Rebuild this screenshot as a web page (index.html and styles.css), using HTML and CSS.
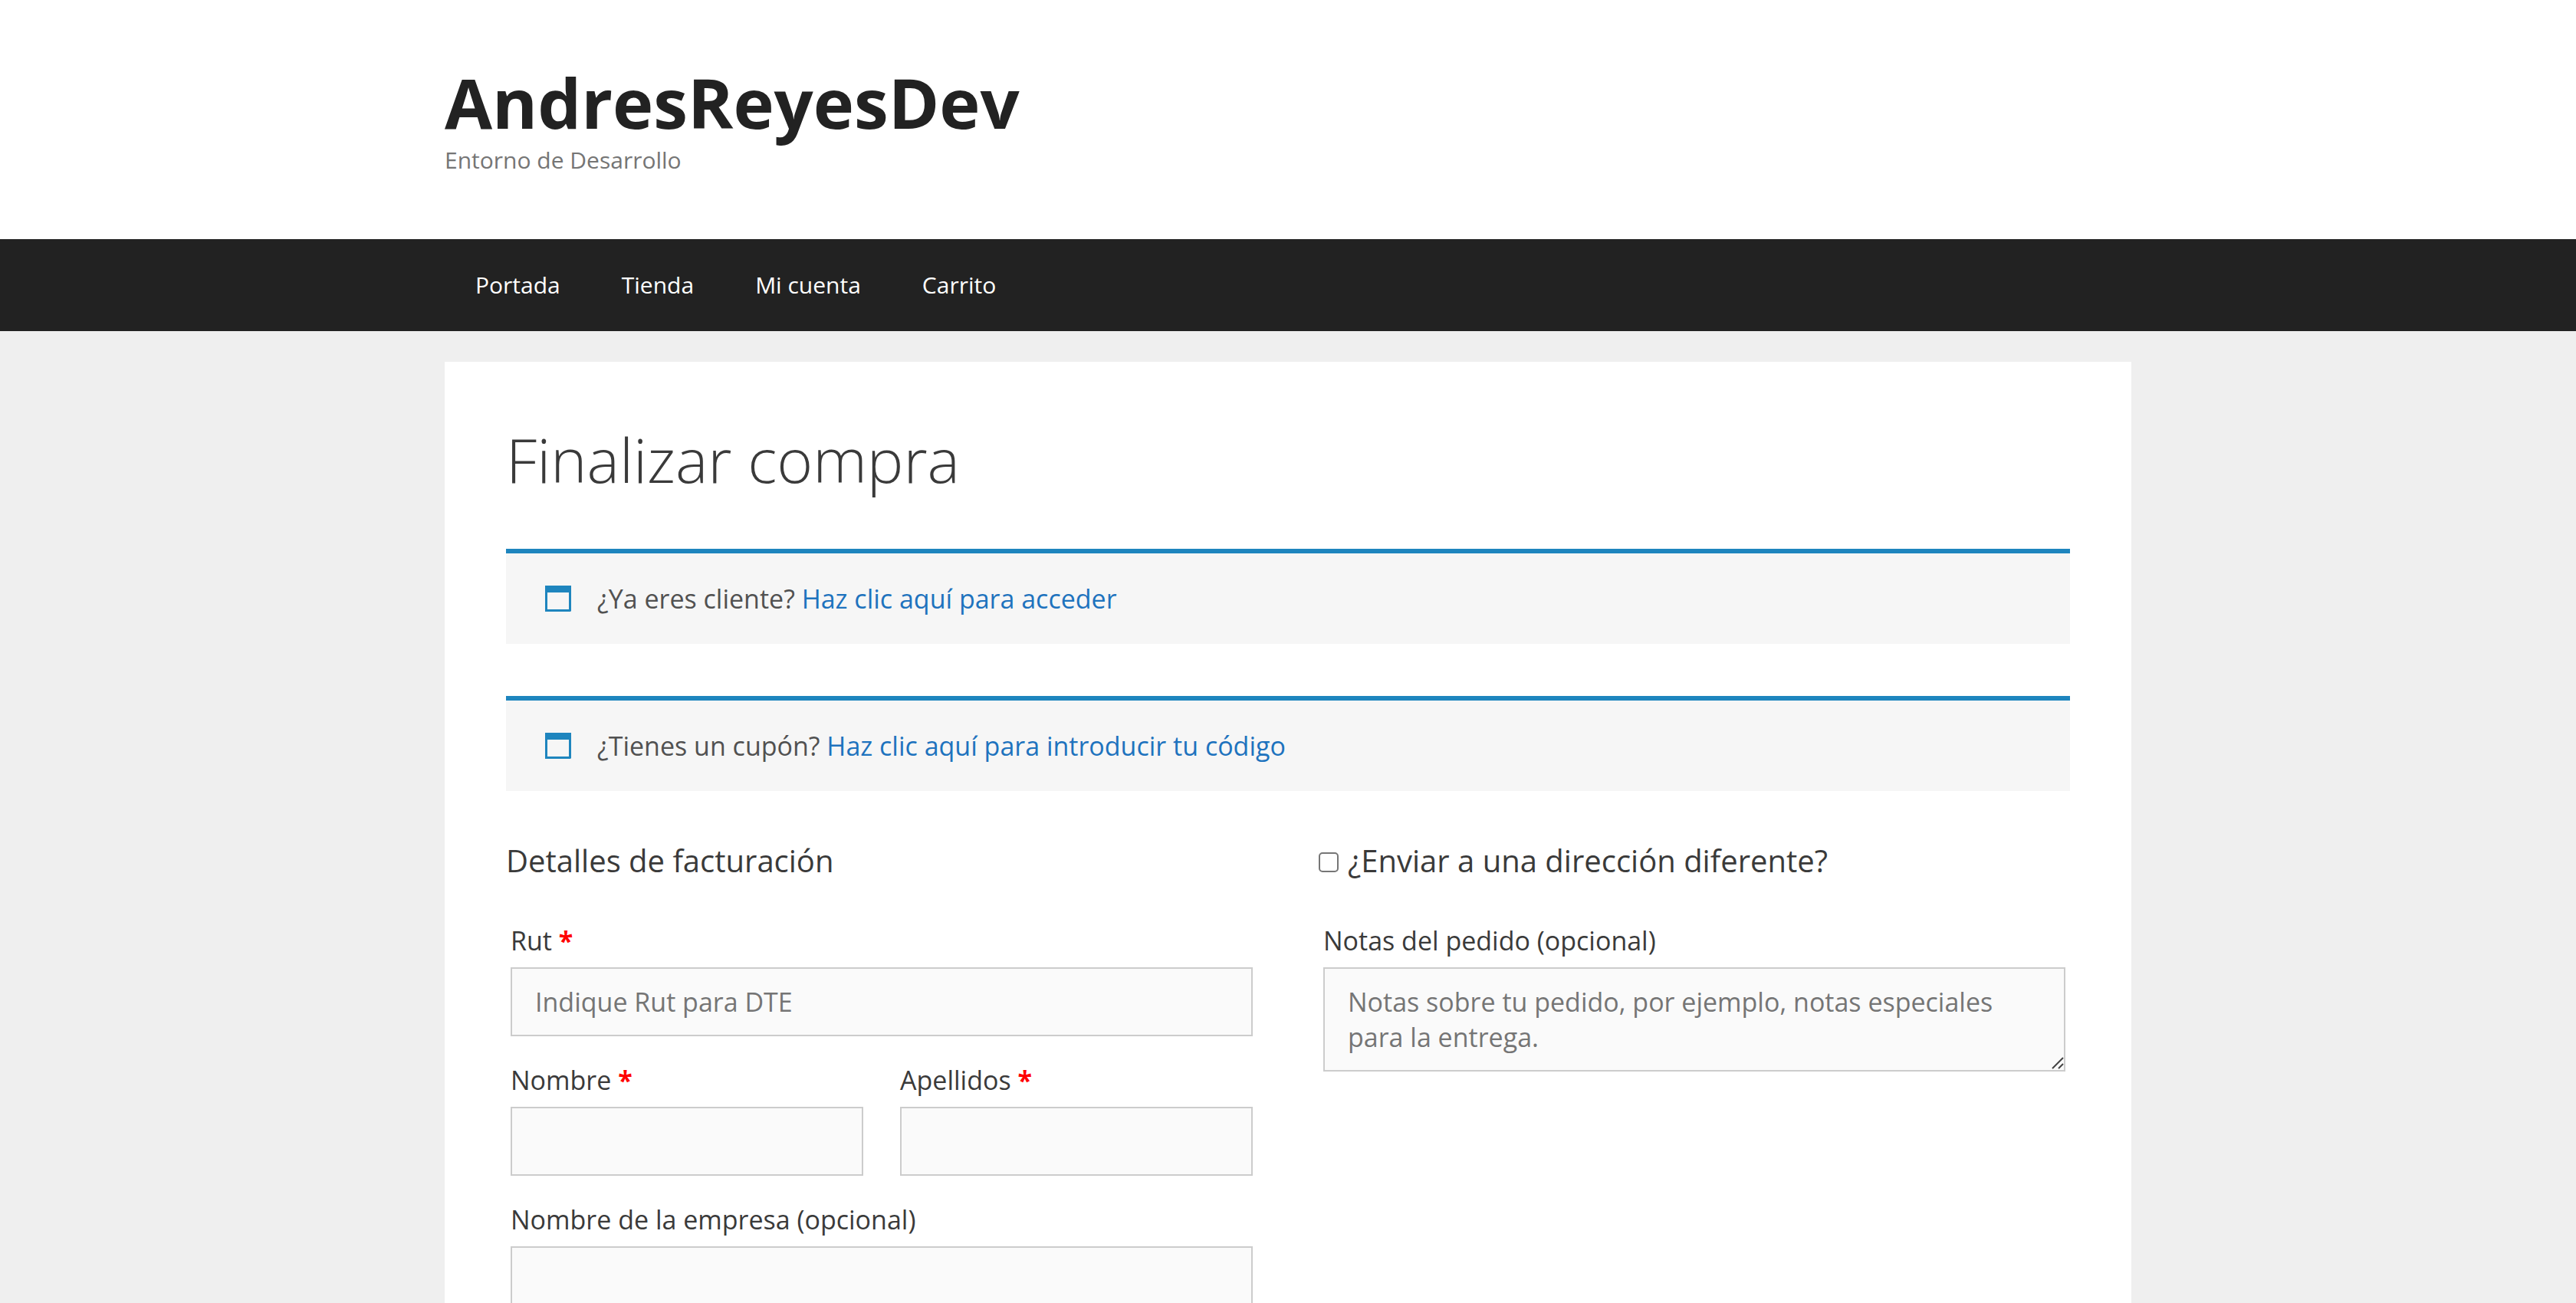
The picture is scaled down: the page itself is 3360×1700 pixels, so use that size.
FILE: index.html
```html
<!DOCTYPE html>
<html lang="es">
<head>
  <meta charset="utf-8">
  <meta name="viewport" content="width=device-width, initial-scale=1">
  <title>Finalizar compra – AndresReyesDev</title>
  <link rel="stylesheet" href="styles.css">
</head>
<body>
  <header class="site-header">
    <div class="container">
      <p class="site-title"><a href="#">AndresReyesDev</a></p>
      <p class="site-description">Entorno de Desarrollo</p>
    </div>
  </header>

  <nav class="main-nav">
    <ul class="container menu">
      <li><a href="#">Portada</a></li>
      <li><a href="#">Tienda</a></li>
      <li><a href="#">Mi cuenta</a></li>
      <li><a href="#">Carrito</a></li>
    </ul>
  </nav>

  <main class="container content">
    <h1 class="entry-title">Finalizar compra</h1>

    <div class="notice">
      <svg class="notice-icon" viewBox="0 0 34 34" aria-hidden="true"><path fill-rule="evenodd" d="M0 0H34V33L33 34H0ZM3 9V31H31V9Z"/></svg>
      <p>¿Ya eres cliente? <a href="#">Haz clic aquí para acceder</a></p>
    </div>

    <div class="notice">
      <svg class="notice-icon" viewBox="0 0 34 34" aria-hidden="true"><path fill-rule="evenodd" d="M0 0H34V33L33 34H0ZM3 9V31H31V9Z"/></svg>
      <p>¿Tienes un cupón? <a href="#">Haz clic aquí para introducir tu código</a></p>
    </div>

    <form class="checkout">
      <section>
        <h3 class="section-title">Detalles de facturación</h3>
        <div class="fields">
          <div class="field wide">
            <label for="rut">Rut <abbr class="required" title="obligatorio">*</abbr></label>
            <input class="control" type="text" id="rut" placeholder="Indique Rut para DTE">
          </div>
          <div class="field">
            <label for="nombre">Nombre <abbr class="required" title="obligatorio">*</abbr></label>
            <input class="control" type="text" id="nombre">
          </div>
          <div class="field">
            <label for="apellidos">Apellidos <abbr class="required" title="obligatorio">*</abbr></label>
            <input class="control" type="text" id="apellidos">
          </div>
          <div class="field wide">
            <label for="empresa">Nombre de la empresa (opcional)</label>
            <input class="control" type="text" id="empresa">
          </div>
        </div>
      </section>

      <section>
        <h3 class="section-title">
          <label class="toggle" for="enviar"><input class="checkbox" type="checkbox" id="enviar"><span>¿Enviar a una dirección diferente?</span></label>
        </h3>
        <div class="fields">
          <div class="field wide">
            <label for="notas">Notas del pedido (opcional)</label>
            <div class="textarea-wrap">
              <textarea class="control" id="notas" rows="2" placeholder="Notas sobre tu pedido, por ejemplo, notas especiales para la entrega."></textarea>
              <svg class="grip" viewBox="0 0 16 16" aria-hidden="true"><path d="M1 15L15 1M9 15L15 9"/></svg>
            </div>
          </div>
        </div>
      </section>
    </form>
  </main>
</body>
</html>
```

FILE: styles.css
```css
* {
  box-sizing: border-box;
}

body {
  margin: 0;
  background: #efefef;
  color: #3a3a3a;
  font-family: "Open Sans", sans-serif;
  font-size: 34px;
  line-height: 50px;
}

h1, h3, p, ul {
  margin: 0;
  padding: 0;
}

a {
  color: #1e73be;
  text-decoration: none;
}

.container {
  max-width: 2200px;
  margin: 0 auto;
}

.site-header {
  padding: 80px 0;
  background: #fff;
}

.site-title {
  font-size: 90px;
  font-weight: 700;
  line-height: 106px;
}

.site-title a {
  color: #222;
}

.site-description {
  color: #757575;
  font-size: 30px;
  line-height: 46px;
}

.main-nav {
  background: #222;
}

.menu {
  display: flex;
  list-style: none;
}

.menu a {
  display: block;
  padding: 0 40px;
  color: #fff;
  font-size: 30px;
  line-height: 120px;
}

.content {
  margin-top: 40px;
  padding: 80px;
  background: #fff;
}

.entry-title {
  margin-bottom: 70px;
  font-size: 80px;
  font-weight: 300;
  line-height: 94px;
}

.notice {
  display: flex;
  align-items: center;
  gap: 34px;
  margin-bottom: 68px;
  padding: 34px 68px 34px 51px;
  border-top: 6px solid #1e85be;
  background: #f6f6f6;
  color: #515151;
}

.notice-icon {
  width: 34px;
  height: 34px;
  fill: #1e85be;
}

.checkout {
  display: grid;
  grid-template-columns: 1fr 1fr;
  gap: 80px;
}

.section-title {
  margin-bottom: 42px;
  font-size: 40px;
  font-weight: 400;
  line-height: 46px;
}

.toggle {
  display: flex;
  align-items: center;
  gap: 12px;
}

.checkbox {
  width: 26px;
  height: 26px;
  margin: 4px 0 0;
  border: 2px solid #767676;
  border-radius: 5px;
  background: #fff;
  appearance: none;
}

.checkbox:checked {
  background: #1e73be;
}

.fields {
  display: grid;
  grid-template-columns: 1fr 1fr;
  gap: 24px 48px;
  padding: 6px;
}

.wide {
  grid-column: 1 / -1;
}

.field label {
  display: block;
  line-height: 66px;
  padding-bottom: 2px;
}

.required {
  color: #f00;
  font-weight: 700;
  text-decoration: none;
}

.control {
  display: block;
  width: 100%;
  padding: 20px 30px;
  border: 2px solid #ccc;
  border-radius: 0;
  background: #fafafa;
  color: #666;
  font: inherit;
  line-height: 46px;
  resize: none;
}

.control::placeholder {
  color: #757575;
}

.textarea-wrap {
  position: relative;
}

.grip {
  position: absolute;
  right: 2px;
  bottom: 3px;
  width: 16px;
  height: 16px;
  fill: none;
  stroke: #444;
  stroke-width: 2;
}
```
